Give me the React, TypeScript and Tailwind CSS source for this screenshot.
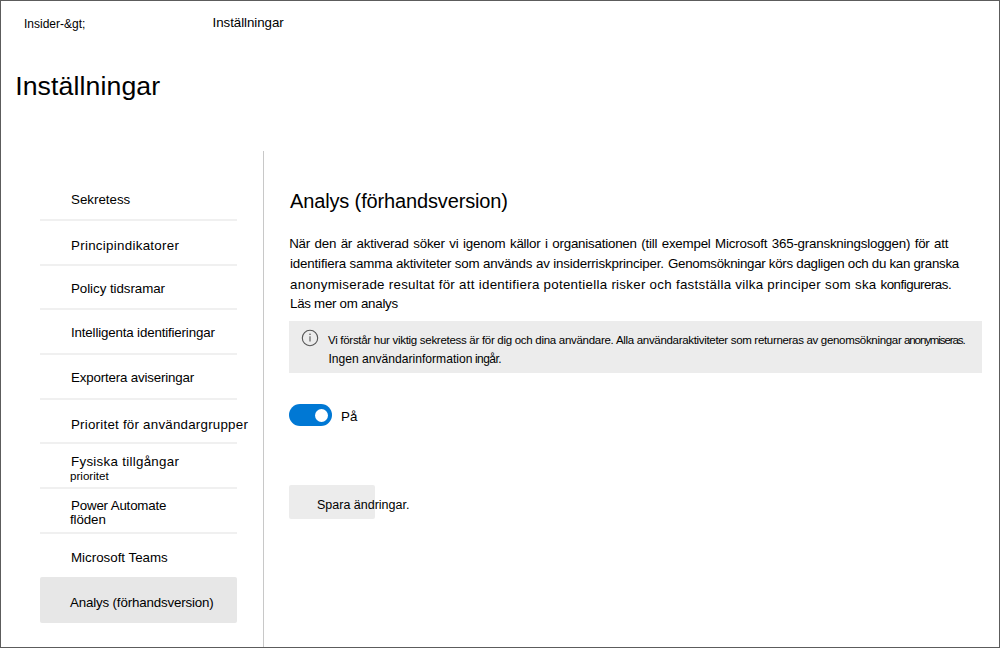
import type { ReactNode } from "react";

type Item = { label: string; sub?: string; row: string; text: string; subText?: string };

const items: Item[] = [
  { label: "Sekretess", row: "h-[45px] pt-[14px]", text: "" },
  { label: "Principindikatorer", row: "h-[45px] pt-[15px]", text: "tracking-[0.29px]" },
  { label: "Policy tidsramar", row: "h-[44px] pt-[13px]", text: "tracking-[-0.05px]" },
  { label: "Intelligenta identifieringar", row: "h-[45px] pt-[13px]", text: "tracking-[-0.16px]" },
  { label: "Exportera aviseringar", row: "h-[45px] pt-[13px]", text: "tracking-[-0.17px]" },
  { label: "Prioritet för användargrupper", row: "h-[44px] pt-[15px]", text: "tracking-[0.23px]" },
  {
    label: "Fysiska tillgångar",
    sub: "prioritet",
    row: "h-[45px] pt-[8px]",
    text: "tracking-[0.29px]",
    subText: "text-[11.6px]",
  },
  {
    label: "Power Automate",
    sub: "flöden",
    row: "h-[45px] pt-[7px]",
    text: "tracking-[-0.18px]",
    subText: "tracking-[-0.1px]",
  },
];

function NavRow({ item }: { item: Item }) {
  return (
    <li className={`border-b-2 border-[#f0f0f0] pl-[31px] whitespace-nowrap ${item.row}`}>
      <a className={`block ${item.text}`}>{item.label}</a>
      {item.sub && <span className={`-mt-[6px] -ml-px block ${item.subText}`}>{item.sub}</span>}
    </li>
  );
}

function Line({ className = "", children }: { className?: string; children: ReactNode }) {
  return <div className={`flex whitespace-pre ${className}`}>{children}</div>;
}

export default function App() {
  return (
    <div className="flex h-[648px] w-[1000px] flex-col overflow-hidden border border-[#5c5c5c] bg-white font-['Liberation_Sans',Arial,sans-serif] text-[13.33px] leading-[20px] text-black">
      <header className="h-[150px]">
        <nav className="flex pt-[12px]">
          <span className="w-[189px] pt-px pl-[23px] text-[12px]">Insider-&amp;gt;</span>
          <span className="pl-[22.5px] tracking-[-0.05px]">Inställningar</span>
        </nav>
        <h1 className="mt-[37px] pl-[14.2px] text-[26.67px] leading-[30px] tracking-[0.1px]">Inställningar</h1>
      </header>

      <div className="flex flex-1">
        <aside className="w-[263px] border-r border-[#c8c8c8] pt-[25px] pl-[39px]">
          <ul className="w-[197px]">
            {items.map((item) => (
              <NavRow key={item.label} item={item} />
            ))}
            <li className="h-[43px] pt-[14px] pl-[31px]">Microsoft Teams</li>
            <li className="h-[46px] rounded-[2px] bg-[#e7e7e7] pt-[16px] pl-[30px] tracking-[-0.16px]">
              Analys (förhandsversion)
            </li>
          </ul>
        </aside>

        <main className="w-[719px] pt-[36px] pl-[26px]">
          <h2 className="text-[20px] leading-[28px] tracking-[-0.14px]">Analys (förhandsversion)</h2>

          <div className="mt-[19px]">
            <Line className="-ml-[0.8px] tracking-[-0.21px] [word-spacing:1px]">
              När den är aktiverad söker vi igenom källor i organisationen (till exempel Microsoft 365-granskningsloggen) för att
            </Line>
            <Line>
              <span className="w-[378px] tracking-[-0.16px]">
                identifiera samma aktiviteter som används av insiderriskprinciper.
              </span>
              <span className="tracking-[-0.29px]">Genomsökningar körs dagligen och du kan granska</span>
            </Line>
            <Line className="mt-px">
              <span className="w-[590.5px] tracking-[0.28px]">
                anonymiserade resultat för att identifiera potentiella risker och fastställa vilka principer som ska
              </span>
              <span className="tracking-[-0.49px]">konfigureras.</span>
            </Line>
            <Line className="-mt-px tracking-[-0.28px]">Läs mer om analys</Line>
          </div>

          <div className="mt-[7px] -ml-px flex h-[52px] w-[693px] bg-[#ececec] pt-[8px] pl-[12px] text-[12px]">
            <svg width="18" height="18" viewBox="0 0 18 18" className="shrink-0">
              <circle cx="9" cy="9" r="7.7" fill="none" stroke="#555" strokeWidth="1.1" />
              <path d="M9 7.3v5.2" stroke="#555" strokeWidth="1.1" />
              <circle cx="9" cy="5.3" r="0.8" fill="#555" />
            </svg>
            <div className="pt-px pl-[9px]">
              <Line className="text-[11.5px]">
                <span className="w-[288px] tracking-[-0.29px]">
                  Vi förstår hur viktig sekretess är för dig och dina användare.
                </span>
                <span className="w-[288px] tracking-[-0.32px]">
                  Alla användaraktiviteter som returneras av genomsökningar
                </span>
                <span className="tracking-[-1.1px]">anonymiseras.</span>
              </Line>
              <Line className="-mt-px">
                <span className="w-[147px] pl-[0.5px] text-[12.1px]">Ingen användarinformation</span>
                <span className="tracking-[-0.55px]">ingår.</span>
              </Line>
            </div>
          </div>

          <div className="mt-[31px] flex">
            <button className="-ml-px flex h-[22px] w-[43px] items-center justify-end rounded-full bg-[#0078d4] pr-[4px]">
              <span className="size-[13px] rounded-full bg-white" />
            </button>
            <span className="pt-[3px] pl-[9px]">På</span>
          </div>

          <button className="mt-[58px] -ml-px block h-[34px] w-[86px] rounded-[2px] bg-[#ececec] pt-[6px] pl-[28px] text-left text-[12.5px] whitespace-nowrap">
            Spara ändringar.
          </button>
        </main>
      </div>
    </div>
  );
}
